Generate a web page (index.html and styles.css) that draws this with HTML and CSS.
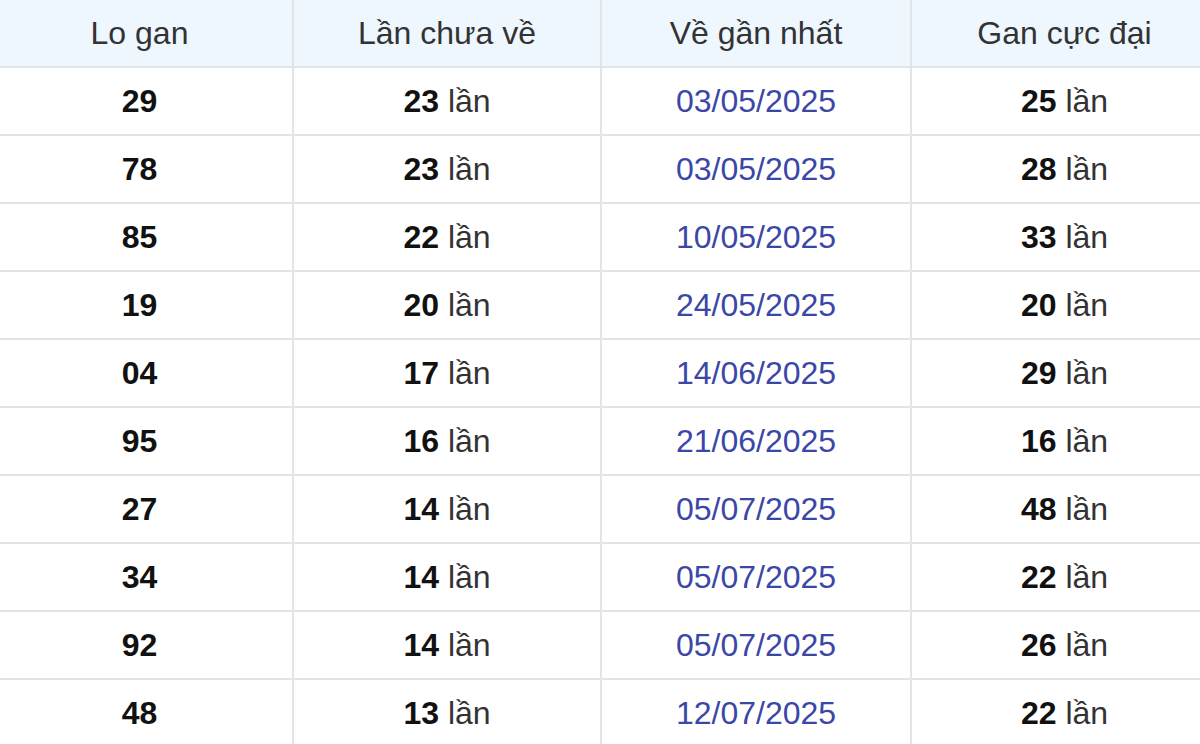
FILE: index.html
```html
<!DOCTYPE html>
<html lang="vi">
<head>
<meta charset="utf-8">
<link rel="stylesheet" href="styles.css">
</head>
<body>
<table class="gan">
  <colgroup>
    <col class="c1"><col class="c2"><col class="c3"><col class="c4">
  </colgroup>
  <thead>
    <tr><th>Lo gan</th><th>Lần chưa về</th><th>Về gần nhất</th><th>Gan cực đại</th></tr>
  </thead>
  <tbody>
    <tr><td class="num">29</td><td><b>23</b> lần</td><td class="date">03/05/2025</td><td><b>25</b> lần</td></tr>
    <tr><td class="num">78</td><td><b>23</b> lần</td><td class="date">03/05/2025</td><td><b>28</b> lần</td></tr>
    <tr><td class="num">85</td><td><b>22</b> lần</td><td class="date">10/05/2025</td><td><b>33</b> lần</td></tr>
    <tr><td class="num">19</td><td><b>20</b> lần</td><td class="date">24/05/2025</td><td><b>20</b> lần</td></tr>
    <tr><td class="num">04</td><td><b>17</b> lần</td><td class="date">14/06/2025</td><td><b>29</b> lần</td></tr>
    <tr><td class="num">95</td><td><b>16</b> lần</td><td class="date">21/06/2025</td><td><b>16</b> lần</td></tr>
    <tr><td class="num">27</td><td><b>14</b> lần</td><td class="date">05/07/2025</td><td><b>48</b> lần</td></tr>
    <tr><td class="num">34</td><td><b>14</b> lần</td><td class="date">05/07/2025</td><td><b>22</b> lần</td></tr>
    <tr><td class="num">92</td><td><b>14</b> lần</td><td class="date">05/07/2025</td><td><b>26</b> lần</td></tr>
    <tr><td class="num">48</td><td><b>13</b> lần</td><td class="date">12/07/2025</td><td><b>22</b> lần</td></tr>
  </tbody>
</table>
</body>
</html>
```
FILE: styles.css
```css
html, body {
  margin: 0;
  padding: 0;
  background: #ffffff;
  overflow: hidden;
}
body {
  font-family: "Liberation Sans", Arial, sans-serif;
  color: #222;
}
.gan {
  border-collapse: collapse;
  table-layout: fixed;
  width: 1230px;
  margin-left: -13px;
  font-size: 32px;
}
.c1 { width: 306px; }
.c2 { width: 308px; }
.c3 { width: 310px; }
.c4 { width: 306px; }
.gan th,
.gan td {
  height: 66px;
  padding: 0;
  text-align: center;
  vertical-align: middle;
  border: 2px solid #e2e5e8;
  line-height: 1;
}
.gan thead tr th {
  border-top: none;
  background: #eef6fe;
  font-weight: normal;
  color: #333;
}
.gan th:first-child, .gan td:first-child { border-left: none; }
.gan th:last-child, .gan td:last-child { border-right: none; }
.gan td { color: #333; }
.gan td b { color: #111; font-weight: bold; }
.gan td.num { font-weight: bold; color: #111; }
.gan td.date { color: #3b47a6; }
```
